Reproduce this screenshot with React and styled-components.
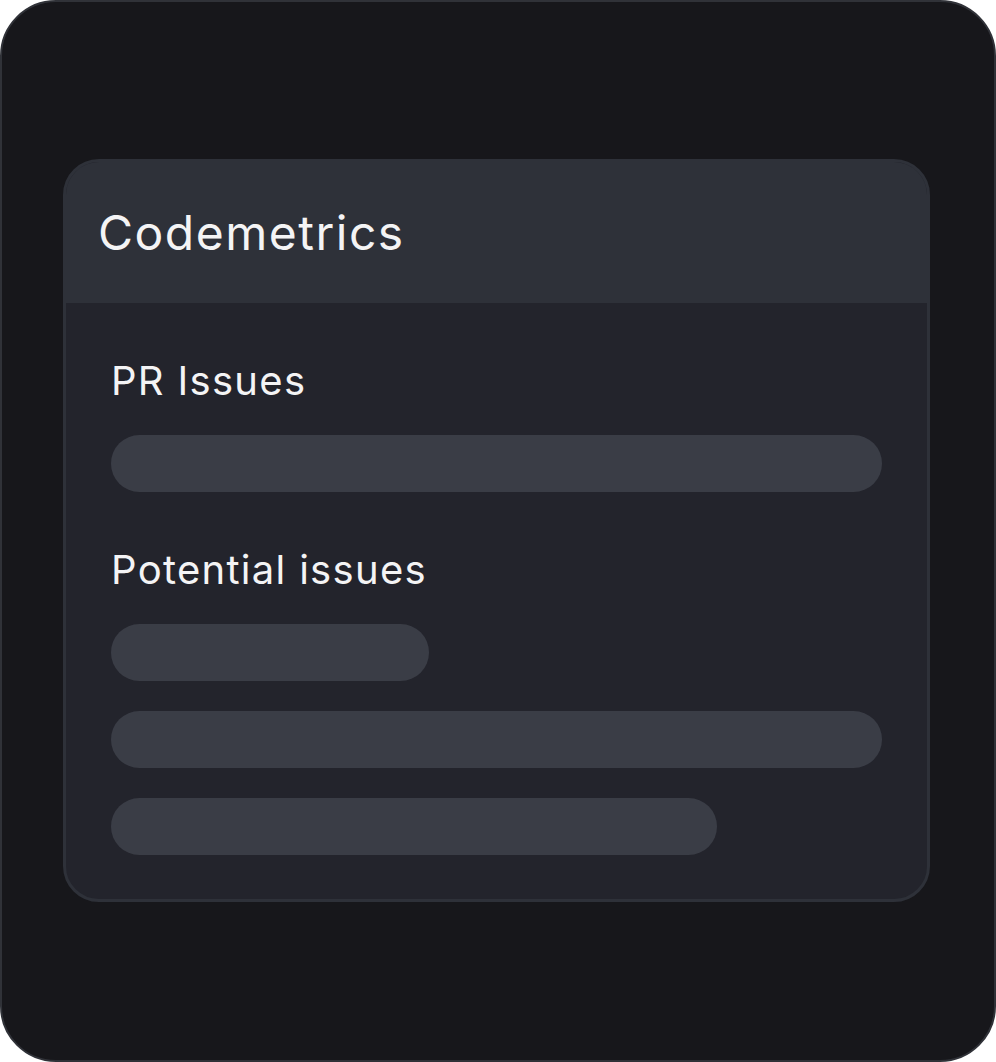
import React from 'react';
import styled, { createGlobalStyle } from 'styled-components';

const GlobalStyles = createGlobalStyle`
  html, body {
    margin: 0;
    padding: 0;
    background: #ffffff;
    font-family: 'Inter', 'Noto Sans', sans-serif;
  }
`;

const Frame = styled.div`
  box-sizing: border-box;
  width: 996px;
  height: 1062px;
  padding: 157px 64px 158px 61px;
  background: #17171b;
  border: 2px solid #303238;
  border-radius: 56px;
`;

const Card = styled.section`
  box-sizing: border-box;
  display: flex;
  flex-direction: column;
  height: 743px;
  background: #23242c;
  border: 3px solid #2e3139;
  border-radius: 36px;
  overflow: hidden;
`;

const Header = styled.header`
  display: flex;
  align-items: center;
  height: 141px;
  padding: 0 32px;
  background: #2e3139;
`;

const Title = styled.h1`
  margin: 0;
  font-size: 48px;
  font-weight: 400;
  letter-spacing: 1.5px;
  color: #f4f4f5;
`;

const Body = styled.div`
  display: flex;
  flex-direction: column;
  padding: 54px 45px 44px;
`;

const Section = styled.div`
  display: flex;
  flex-direction: column;
  gap: 30px;

  & + & {
    margin-top: 54px;
  }
`;

const Label = styled.h2`
  margin: 0;
  font-size: 40px;
  line-height: 48px;
  font-weight: 400;
  letter-spacing: 1.3px;
  color: #f4f4f5;
`;

const Bar = styled.div`
  width: ${(p) => p.$width};
  height: 57px;
  border-radius: 29px;
  background: #3a3d46;
`;

export default function App() {
  return (
    <>
      <GlobalStyles />
      <Frame>
        <Card>
          <Header>
            <Title>Codemetrics</Title>
          </Header>
          <Body>
            <Section>
              <Label>PR Issues</Label>
              <Bar $width="100%" />
            </Section>
            <Section>
              <Label>Potential issues</Label>
              <Bar $width="41.2%" />
              <Bar $width="100%" />
              <Bar $width="78.6%" />
            </Section>
          </Body>
        </Card>
      </Frame>
    </>
  );
}
